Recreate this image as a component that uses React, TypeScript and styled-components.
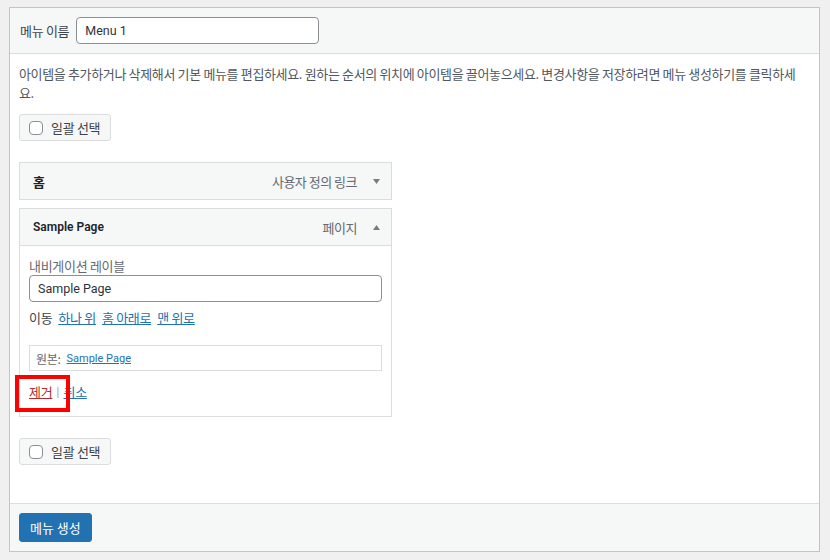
import React from "react";
import styled, { createGlobalStyle } from "styled-components";

const GlobalStyle = createGlobalStyle`
  html, body { margin: 0; padding: 0; }
  body {
    background: #f0f0f1;
    font-family: Roboto, "Noto Sans CJK KR", sans-serif;
    color: #3c434a;
  }
  * { box-sizing: border-box; }
`;

const ko = `"Noto Sans CJK KR", sans-serif`;
const latin = `Roboto, "Noto Sans CJK KR", sans-serif`;

const Page = styled.div`
  padding: 7px 10px 8px 9px;
`;

const Panel = styled.div`
  width: 811px;
  border: 1px solid #c3c4c7;
  background: #fff;
`;

const PanelHeader = styled.div`
  height: 46px;
  background: #f6f7f7;
  border-bottom: 1px solid #dcdcde;
  display: flex;
  align-items: center;
  padding: 0 10px;
  gap: 7px;
`;

const KoText = styled.span<{ $color?: string; $size?: number }>`
  font-family: ${ko};
  font-size: ${(p) => p.$size || 13}px;
  letter-spacing: -0.3px;
  color: ${(p) => p.$color || "#3c434a"};
`;

const TextInput = styled.input<{ $width: string }>`
  width: ${(p) => p.$width};
  height: 27px;
  border: 1px solid #8c8f94;
  border-radius: 4px;
  padding: 0 8px;
  font-family: ${latin};
  font-size: 12.5px;
  color: #2c3338;
  background: #fff;
  outline: none;
`;

const Body = styled.div`
  padding: 10px 9px 38px;
`;

const Description = styled.p`
  margin: 0 0 12px;
  font-family: ${ko};
  font-size: 13px;
  letter-spacing: -0.35px;
  line-height: 19px;
  color: #50575e;
  width: 791px;
`;

const BulkButton = styled.label<{ $mt?: number }>`
  display: inline-flex;
  align-items: center;
  gap: 8px;
  height: 27px;
  padding: 0 10px 0 9px;
  margin-top: ${(p) => p.$mt || 0}px;
  background: #f6f7f7;
  border: 1px solid #dcdcde;
  border-radius: 3px;
`;

const CheckBox = styled.span`
  width: 14px;
  height: 14px;
  border: 1px solid #8c8f94;
  border-radius: 4px;
  background: #fff;
`;

const MenuList = styled.div`
  width: 373px;
  margin-top: 21px;
  display: flex;
  flex-direction: column;
  gap: 8px;
`;

const MenuItem = styled.div`
  border: 1px solid #dcdcde;
  background: #fff;
`;

const ItemBar = styled.div<{ $open?: boolean }>`
  height: ${(p) => (p.$open ? 37 : 36)}px;
  background: #f6f7f7;
  display: flex;
  align-items: center;
  padding: 0 11px 0 13px;
  border-bottom: ${(p) => (p.$open ? "1px solid #dcdcde" : "none")};
`;

const ItemTitle = styled.span<{ $ko?: boolean }>`
  flex: 1;
  font-family: ${(p) => (p.$ko ? ko : latin)};
  font-weight: ${(p) => (p.$ko ? 700 : 600)};
  font-size: ${(p) => (p.$ko ? 13 : 12)}px;
  color: #1d2327;
`;

const ItemType = styled.span`
  font-family: ${ko};
  font-size: 13px;
  letter-spacing: -0.5px;
  color: #646970;
  margin-right: 16px;
`;

const Arrow = styled.svg`
  width: 7px;
  height: 5px;
  fill: #787c82;
`;

const Settings = styled.div`
  position: relative;
  padding: 12px 9px 15px;
  display: flex;
  flex-direction: column;
`;

const FieldLabel = styled.div`
  font-family: ${ko};
  font-size: 13px;
  letter-spacing: -0.3px;
  color: #646970;
  line-height: 16px;
  margin-bottom: 1px;
`;

const MoveRow = styled.div`
  display: flex;
  gap: 6px;
  margin-top: 7px;
  line-height: 18px;
`;

const Link = styled.a<{ $danger?: boolean; $latin?: boolean; $size?: number }>`
  font-family: ${(p) => (p.$latin ? latin : ko)};
  font-size: ${(p) => p.$size || 13}px;
  letter-spacing: ${(p) => (p.$latin ? "0" : "-0.3px")};
  color: ${(p) => (p.$danger ? "#b32d2e" : "#2271b1")};
  text-decoration: underline;
  cursor: pointer;
`;

const Original = styled.div`
  margin-top: 18px;
  height: 26px;
  border: 1px solid #dcdcde;
  display: flex;
  align-items: center;
  gap: 6px;
  padding: 0 6px;
`;

const ActionRow = styled.div`
  margin-top: 12px;
  display: flex;
  align-items: center;
  gap: 4px;
  line-height: 18px;
`;

const Sep = styled.span`
  color: #a7aaad;
  font-family: ${latin};
  font-size: 13px;
`;

const Highlight = styled.div`
  position: absolute;
  left: -5px;
  top: 129px;
  width: 55px;
  height: 37px;
  border: 4px solid #ff0000;
  pointer-events: none;
`;

const Footer = styled.div`
  border-top: 1px solid #dcdcde;
  background: #f6f7f7;
  height: 48px;
  padding: 9px 9px;
`;

const PrimaryButton = styled.button`
  height: 29px;
  padding: 0 10px;
  background: #2271b1;
  border: 1px solid #2271b1;
  border-radius: 3px;
  color: #fff;
  font-family: ${ko};
  font-size: 13px;
`;

const Down = () => (
  <Arrow viewBox="0 0 7 5">
    <polygon points="0,0 7,0 3.5,5" />
  </Arrow>
);
const Up = () => (
  <Arrow viewBox="0 0 7 5">
    <polygon points="0,5 7,5 3.5,0" />
  </Arrow>
);

const Bulk = ({ mt }: { mt?: number }) => (
  <div>
    <BulkButton $mt={mt}>
      <CheckBox />
      <KoText>일괄 선택</KoText>
    </BulkButton>
  </div>
);

export default function App() {
  return (
    <Page>
      <GlobalStyle />
      <Panel>
        <PanelHeader>
          <KoText>메뉴 이름</KoText>
          <TextInput $width="243px" defaultValue="Menu 1" />
        </PanelHeader>
        <Body>
          <Description>
            아이템을 추가하거나 삭제해서 기본 메뉴를 편집하세요. 원하는 순서의 위치에 아이템을 끌어놓으세요. 변경사항을 저장하려면 메뉴 생성하기를 클릭하세요.
          </Description>
          <Bulk />
          <MenuList>
            <MenuItem>
              <ItemBar>
                <ItemTitle $ko>홈</ItemTitle>
                <ItemType>사용자 정의 링크</ItemType>
                <Down />
              </ItemBar>
            </MenuItem>
            <MenuItem>
              <ItemBar $open>
                <ItemTitle>Sample Page</ItemTitle>
                <ItemType>페이지</ItemType>
                <Up />
              </ItemBar>
              <Settings>
                <FieldLabel>내비게이션 레이블</FieldLabel>
                <TextInput $width="353px" defaultValue="Sample Page" />
                <MoveRow>
                  <KoText>이동</KoText>
                  <Link>하나 위</Link>
                  <Link>홈 아래로</Link>
                  <Link>맨 위로</Link>
                </MoveRow>
                <Original>
                  <KoText $color="#646970" $size={12}>원본:</KoText>
                  <Link $latin $size={11}>Sample Page</Link>
                </Original>
                <ActionRow>
                  <Link $danger>제거</Link>
                  <Sep>|</Sep>
                  <Link>취소</Link>
                </ActionRow>
                <Highlight />
              </Settings>
            </MenuItem>
          </MenuList>
          <Bulk mt={21} />
        </Body>
        <Footer>
          <PrimaryButton>메뉴 생성</PrimaryButton>
        </Footer>
      </Panel>
    </Page>
  );
}
